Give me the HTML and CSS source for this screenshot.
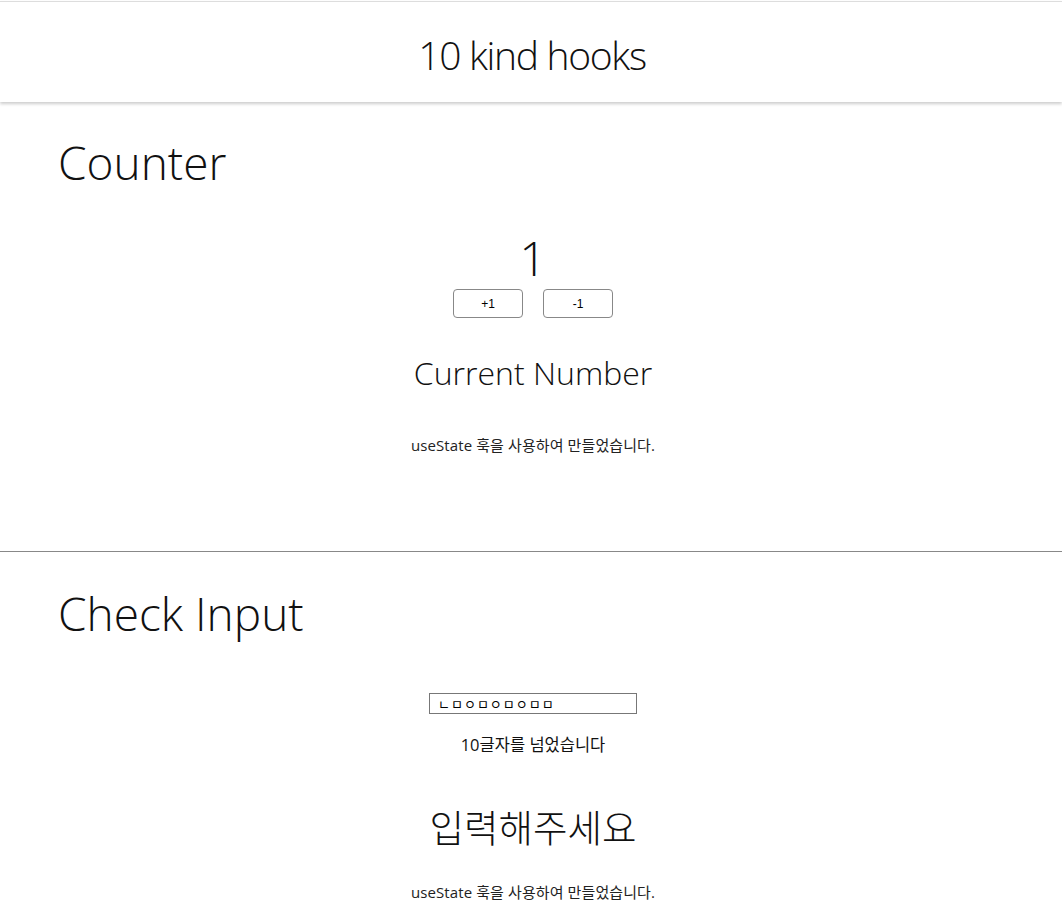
FILE: index.html
```html
<!DOCTYPE html>
<html lang="ko">
<head>
<meta charset="utf-8">
<link rel="stylesheet" href="styles.css">
</head>
<body>
<header class="top">
  <h1 class="title">10 kind hooks</h1>
</header>
<main>
  <section class="block counter">
    <h2 class="block-title">Counter</h2>
    <div class="center">
      <div class="number">1</div>
      <div class="buttons">
        <button class="btn">+1</button>
        <button class="btn">-1</button>
      </div>
      <h3 class="sub">Current Number</h3>
      <p class="note">useState 훅을 사용하여 만들었습니다.</p>
    </div>
  </section>
  <hr class="divider">
  <section class="block check">
    <h2 class="block-title">Check Input</h2>
    <div class="center">
      <input class="field" type="text" value="ㄴㅁㅇㅁㅇㅁㅇㅁㅁ">
      <p class="warn">10글자를 넘었습니다</p>
      <h3 class="sub big">입력해주세요</h3>
      <p class="note last">useState 훅을 사용하여 만들었습니다.</p>
    </div>
  </section>
</main>
</body>
</html>
```
FILE: styles.css
```css
html, body {
  margin: 0;
  padding: 0;
  background: #fff;
}
body {
  font-family: "Open Sans", "Noto Sans CJK KR", sans-serif;
  font-weight: 300;
  color: #111;
}
.top {
  margin-top: 1px;
  border-top: 1px solid #ddd;
  height: 100px;
  display: flex;
  align-items: center;
  justify-content: center;
  padding-left: 2px;
  box-shadow: 0 2px 3px rgba(0,0,0,0.2);
}
.title {
  margin: 0;
  font-weight: 300;
  font-size: 39px;
  letter-spacing: -1.3px;
  line-height: 44px;
  padding-top: 6px;
}
.block {
  padding: 0 54px 0 58px;
}
.counter {
  height: 449px;
  padding-top: 28px;
  box-sizing: border-box;
}
.block-title {
  margin: 0;
  font-weight: 300;
  font-size: 46px;
  line-height: 64px;
}
.center {
  display: flex;
  flex-direction: column;
  align-items: center;
}
.counter .center {
  margin-top: 39px;
}
.number {
  font-size: 48px;
  line-height: 50px;
  font-weight: 300;
}
.buttons {
  display: flex;
  gap: 20px;
  margin-top: 6px;
}
.btn {
  width: 70px;
  height: 29px;
  border: 1px solid #888;
  border-radius: 4px;
  background: #fff;
  font-family: "Liberation Sans", Arial, sans-serif;
  font-size: 12px;
  color: #000;
}
.sub {
  margin: 34px 0 0;
  font-weight: 300;
  font-size: 32px;
  line-height: 42px;
}
.note {
  margin: 42px 0 0;
  font-size: 15px;
  line-height: 18px;
  color: #222;
  font-weight: 400;
  letter-spacing: 0.1px;
}
.divider {
  margin: 0;
  border: 0;
  border-top: 1px solid #888;
}
.check {
  padding-top: 29px;
}
.check .center {
  margin-top: 48px;
}
.field {
  width: 208px;
  height: 21px;
  box-sizing: border-box;
  border: 1px solid #777;
  padding: 0 8px;
  font-size: 13px;
  letter-spacing: 1px;
  font-family: "Noto Sans CJK KR", sans-serif;
  color: #000;
}
.warn {
  margin: 18px 0 0;
  font-size: 16.5px;
  font-weight: 400;
  color: #111;
}
.big {
  margin-top: 50px;
  font-size: 37.5px;
  line-height: 44px;
}
.note.last {
  margin-top: 33px;
}
```
